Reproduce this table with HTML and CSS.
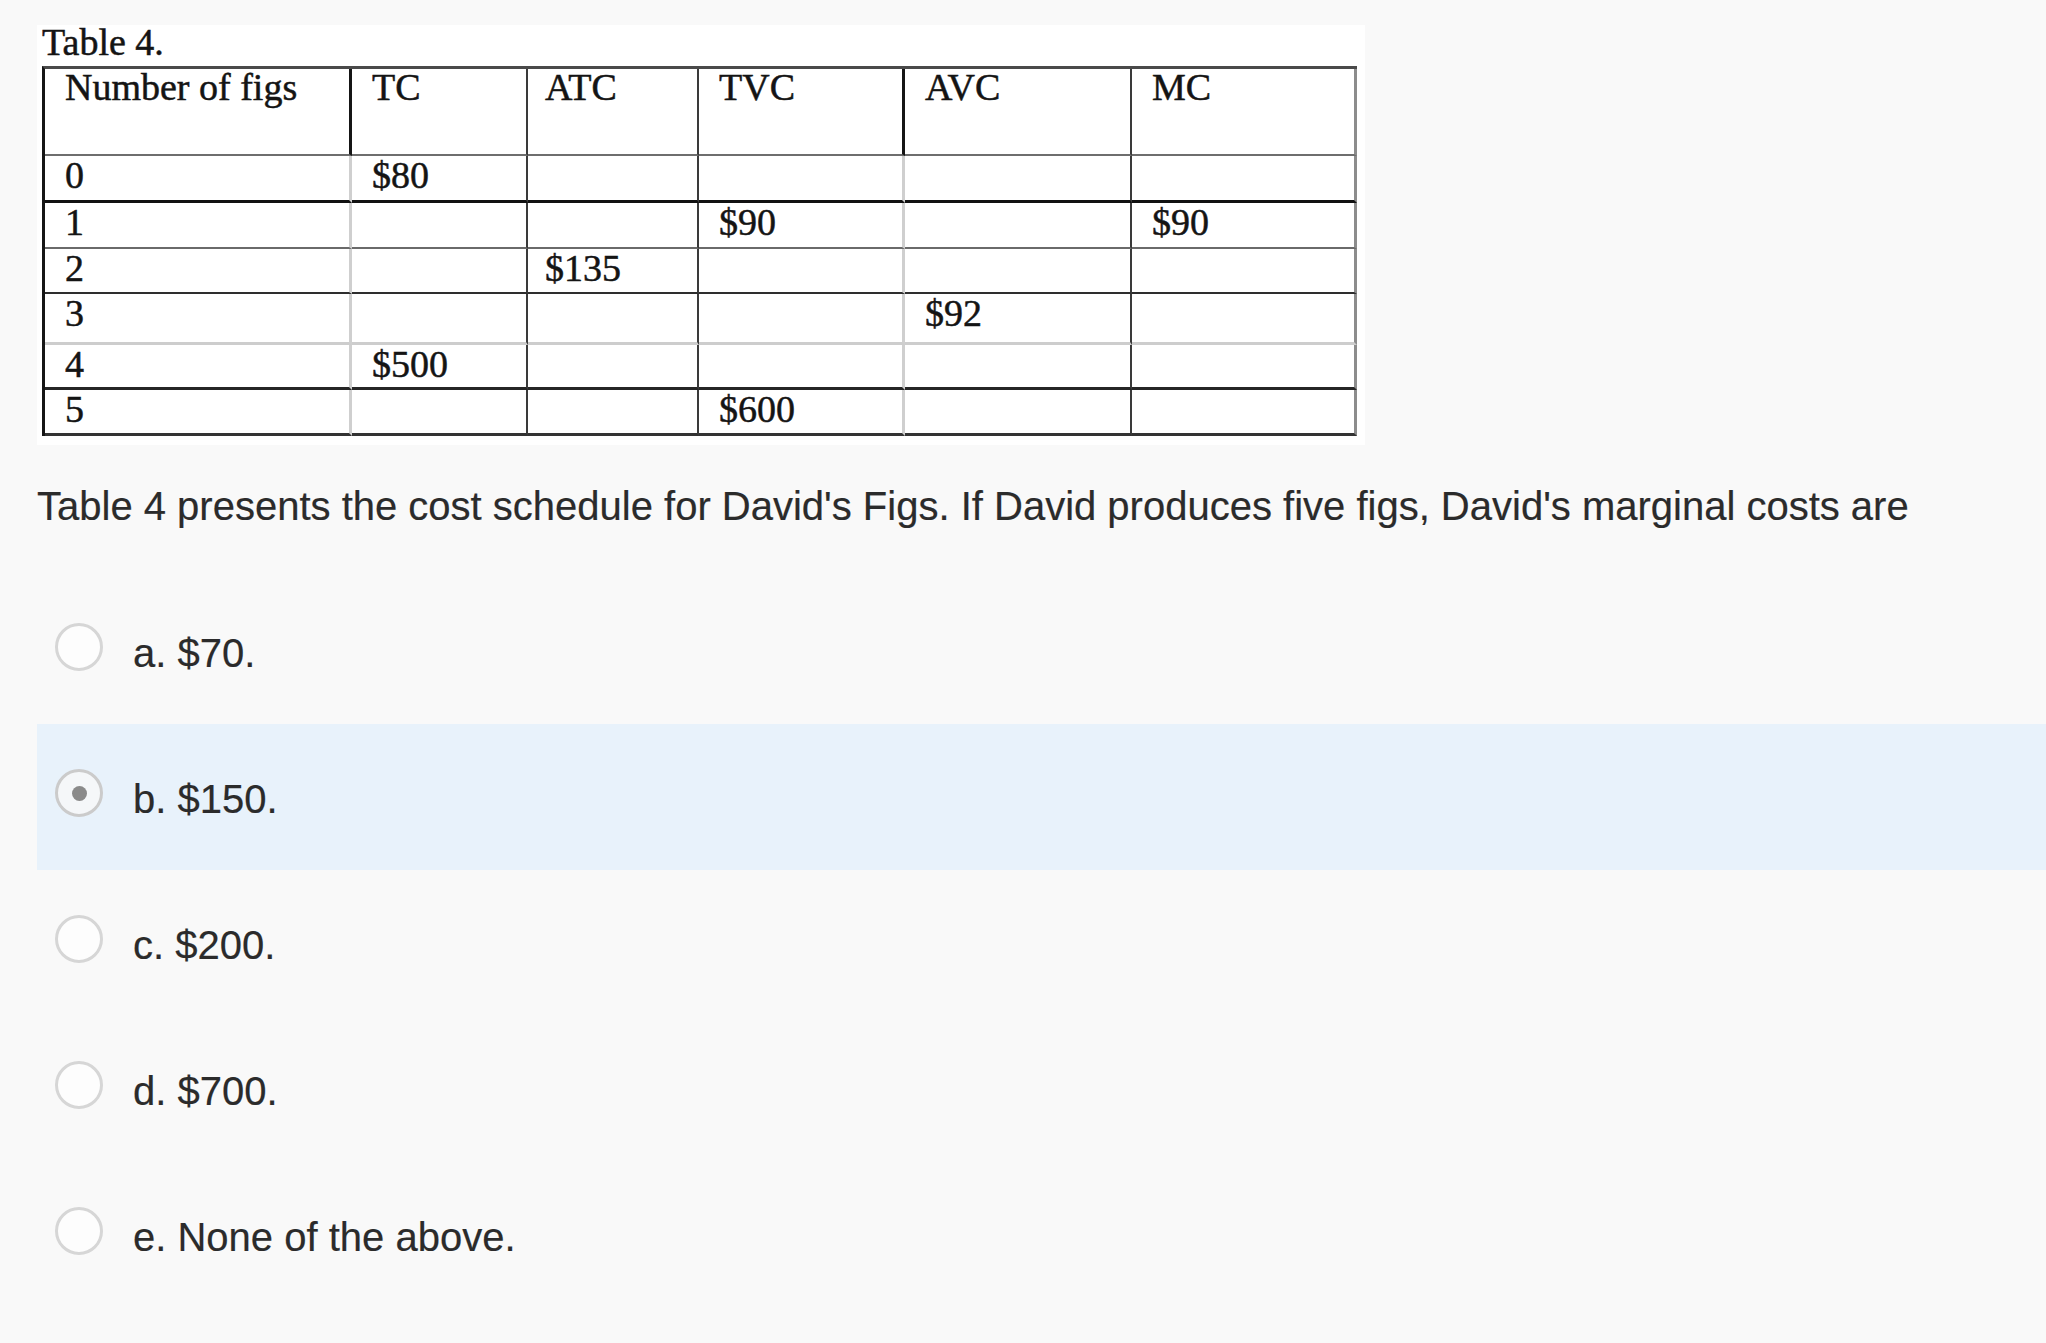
FILE: index.html
```html
<!DOCTYPE html>
<html>
<head>
<meta charset="utf-8">
<title>Table 4 question</title>
<link rel="stylesheet" href="styles.css">
</head>
<body>
<div class="page">
  <div class="figure">
    <div class="caption">Table 4.</div>
    <table class="cost">
      <colgroup>
        <col class="c1"><col class="c2"><col class="c3"><col class="c4"><col class="c5"><col class="c6">
      </colgroup>
      <tr class="head"><td>Number of figs</td><td>TC</td><td>ATC</td><td>TVC</td><td>AVC</td><td>MC</td></tr>
      <tr class="r0"><td>0</td><td>$80</td><td></td><td></td><td></td><td></td></tr>
      <tr class="r1"><td>1</td><td></td><td></td><td>$90</td><td></td><td>$90</td></tr>
      <tr class="r2"><td>2</td><td></td><td>$135</td><td></td><td></td><td></td></tr>
      <tr class="r3"><td>3</td><td></td><td></td><td></td><td>$92</td><td></td></tr>
      <tr class="r4"><td>4</td><td>$500</td><td></td><td></td><td></td><td></td></tr>
      <tr class="r5"><td>5</td><td></td><td></td><td>$600</td><td></td><td></td></tr>
    </table>
  </div>
  <p class="question">Table 4 presents the cost schedule for David's Figs. If David produces five figs, David's marginal costs are</p>
  <ul class="options">
    <li class="option"><span class="radio"></span><span class="label">a. $70.</span></li>
    <li class="option selected"><span class="radio checked"></span><span class="label">b. $150.</span></li>
    <li class="option"><span class="radio"></span><span class="label">c. $200.</span></li>
    <li class="option"><span class="radio"></span><span class="label">d. $700.</span></li>
    <li class="option"><span class="radio"></span><span class="label">e. None of the above.</span></li>
  </ul>
</div>
</body>
</html>
```
FILE: styles.css
```css
html, body {
  margin: 0;
  padding: 0;
}
body {
  background: #f9f9f9;
  font-family: "Liberation Sans", Arial, Helvetica, sans-serif;
  color: #2e2e2e;
}
.page {
  padding: 25px 0 0 37px;
}

/* table picture */
.figure {
  width: 1328px;
  height: 420px;
  box-sizing: border-box;
  padding-left: 5px;
  background: #ffffff;
}
.caption {
  font-family: "Liberation Serif", "Times New Roman", serif;
  font-size: 38px;
  line-height: 34px;
  color: #141414;
  -webkit-text-stroke: 0.5px #141414;
}
.cost {
  margin-top: 7px;
  width: 1315px;
  table-layout: fixed;
  border-collapse: separate;
  border-spacing: 0;
  border-top: 3px solid #4a4a4a;
  border-left: 3px solid #151515;
  font-family: "Liberation Serif", "Times New Roman", serif;
  font-size: 38px;
  line-height: 32px;
  color: #141414;
  -webkit-text-stroke: 0.5px #141414;
}
.c1 { width: 307px; }
.c2 { width: 176px; }
.c3 { width: 171px; }
.c4 { width: 206px; }
.c5 { width: 227px; }
.c6 { width: 225px; }

.cost td {
  padding: 3px 0 0 20px;
  vertical-align: top;
  white-space: nowrap;
  border-right: 2px solid #3a3a3a;
  border-bottom: 2px solid #3a3a3a;
}
.cost td:nth-child(3) { padding-left: 17px; }
.cost td:nth-child(1),
.cost td:nth-child(4) {
  border-right: 3px solid #cfcfcf;
}
.cost .head td:nth-child(1),
.cost .head td:nth-child(4) {
  border-right-color: #151515;
}
.cost td:nth-child(6) {
  border-right: 3px solid #8c8c8c;
}
.cost .head td { padding-top: 2px; }

.head { height: 87px; }
.head td { border-bottom: 2px solid #6e6e6e; }
.r0 { height: 47px; }
.r0 td { border-bottom: 3px solid #111111; }
.r1 { height: 46px; }
.r1 td { border-bottom: 2px solid #6a6a6a; }
.r2 { height: 45px; }
.r2 td { border-bottom: 2px solid #2e2e2e; }
.r3 { height: 51px; }
.r3 td { border-bottom: 3px solid #cdcdcd; }
.r4 { height: 45px; }
.r4 td { border-bottom: 3px solid #262626; }
.r5 { height: 46px; }
.r5 td { border-bottom: 3px solid #333333; }

/* question */
.question {
  margin: 38px 0 0;
  font-size: 40px;
  line-height: 46px;
  color: #2b2b2b;
  white-space: nowrap;
  -webkit-text-stroke: 0.2px #2b2b2b;
}

.options {
  list-style: none;
  margin: 49px 0 0;
  padding: 0;
}
.option {
  height: 146px;
  display: flex;
  align-items: center;
  padding-left: 18px;
}
.option.selected {
  background: #e8f2fb;
}
.radio {
  width: 48px;
  height: 48px;
  box-sizing: border-box;
  border: 3px solid #d6d6d6;
  border-radius: 50%;
  background: #fdfdfd;
  margin: 0 30px 8px 0;
  flex: none;
  display: flex;
  align-items: center;
  justify-content: center;
}
.radio.checked {
  background: #f5f7f9;
  border-color: #cbcbcb;
}
.radio.checked::after {
  content: "";
  width: 15px;
  height: 15px;
  border-radius: 50%;
  background: #8a8a8a;
}
.label {
  font-size: 40px;
  line-height: 46px;
  padding-top: 4px;
  color: #2b2b2b;
  -webkit-text-stroke: 0.2px #2b2b2b;
}
```
